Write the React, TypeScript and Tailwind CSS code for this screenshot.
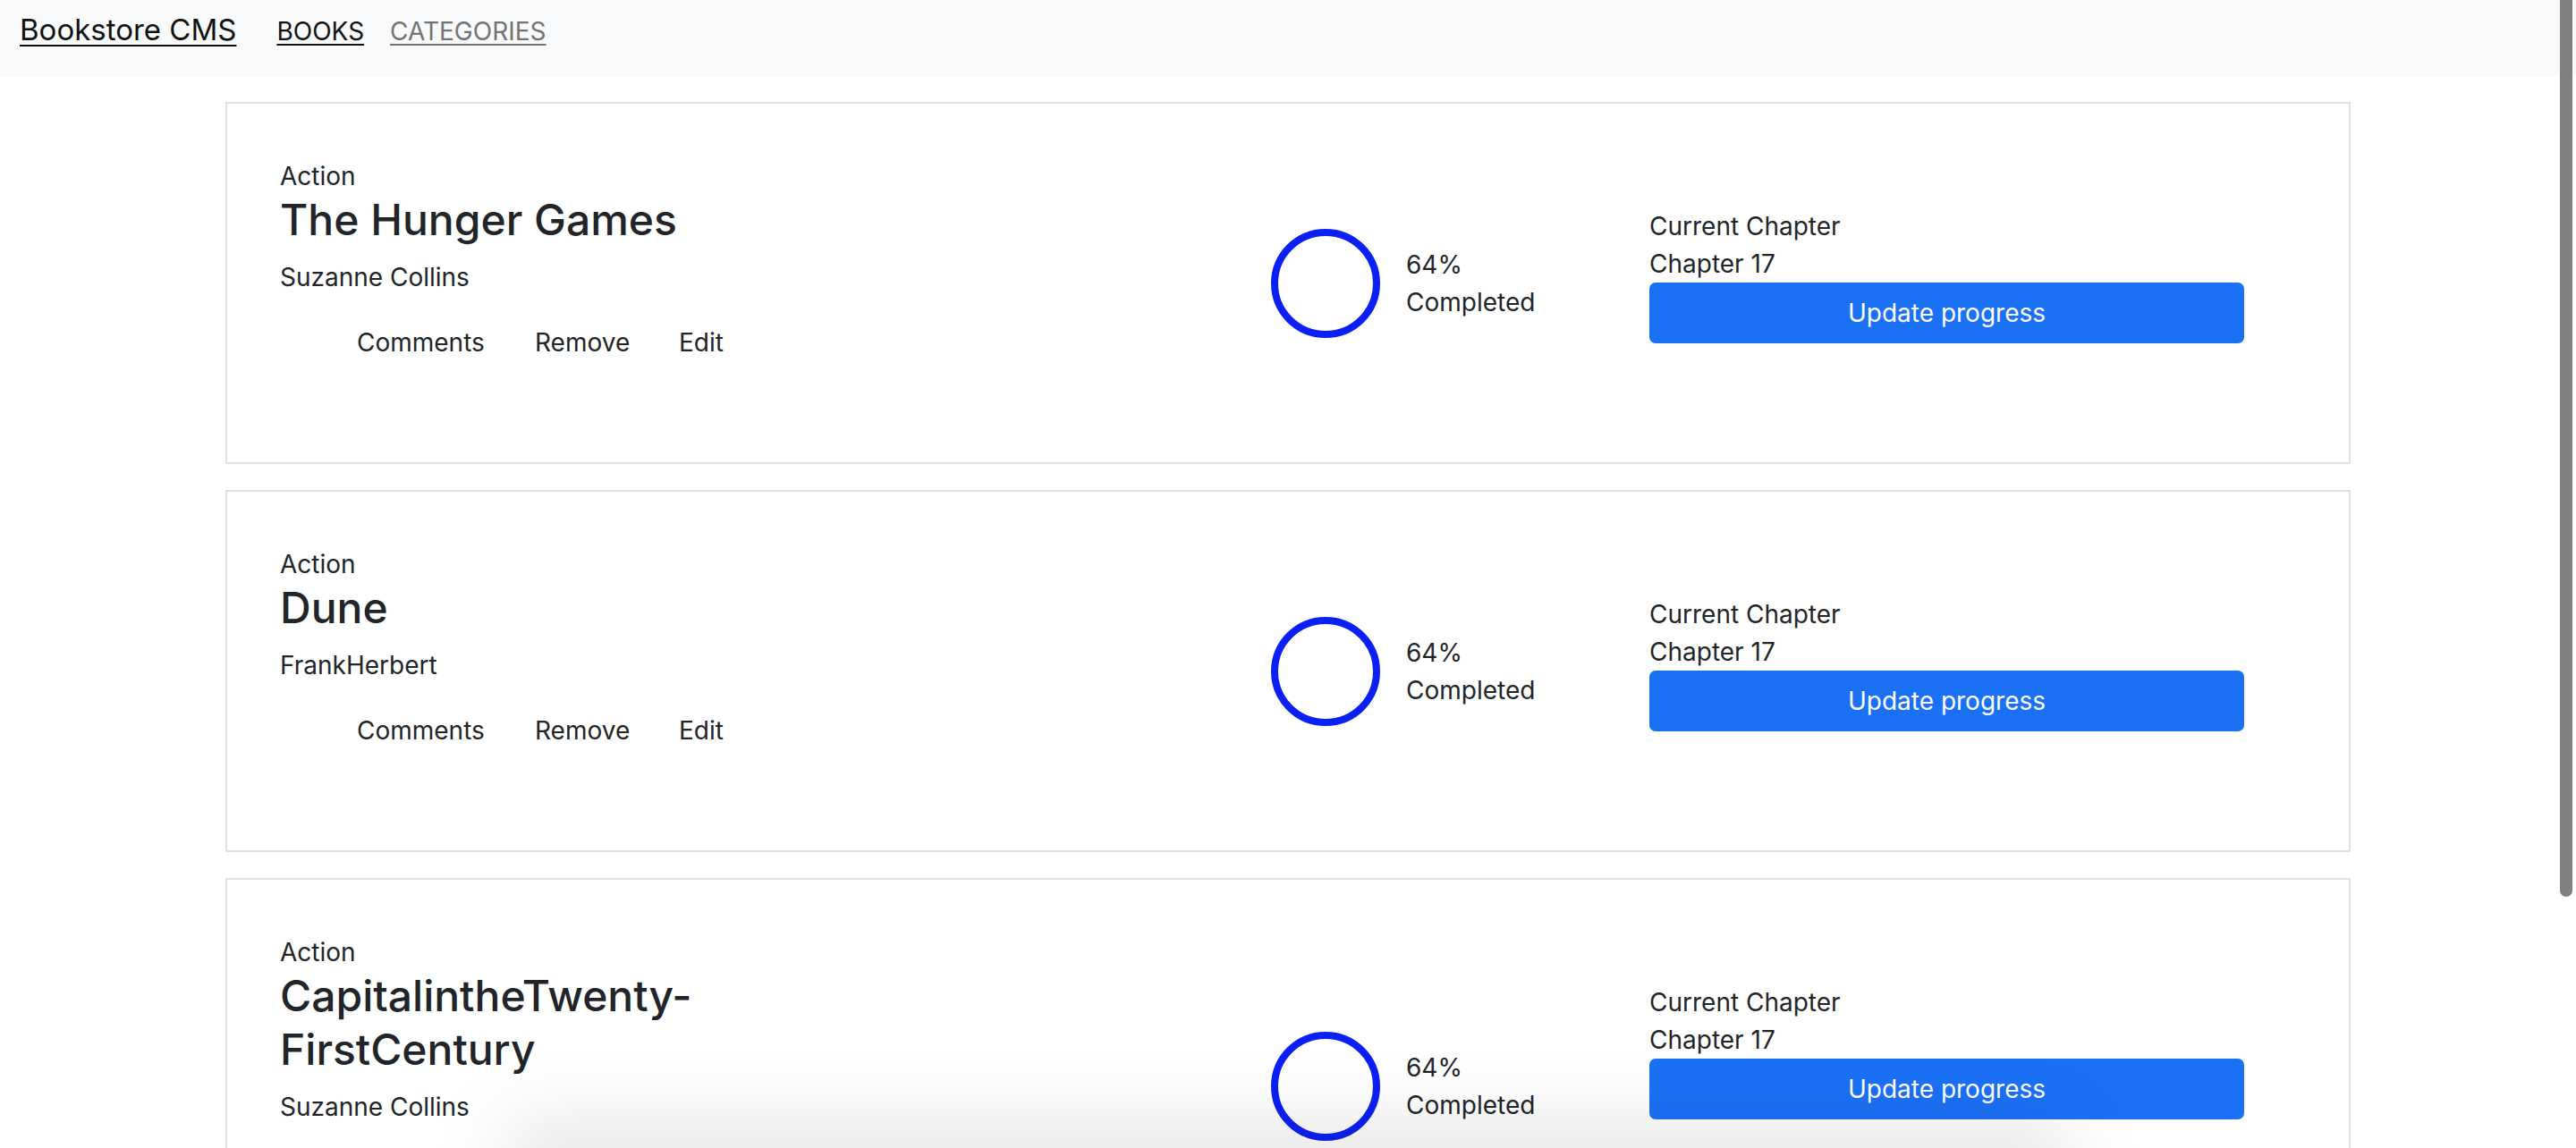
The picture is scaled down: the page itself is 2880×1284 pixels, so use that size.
import React from 'react'

interface Book {
  category: string
  title: string
  author: string
}

const books: Book[] = [
  { category: 'Action', title: 'The Hunger Games', author: 'Suzanne Collins' },
  { category: 'Action', title: 'Dune', author: 'FrankHerbert' },
  { category: 'Action', title: 'CapitalintheTwenty-FirstCentury', author: 'Suzanne Collins' }
]

const Navbar = () => (
  <nav className="h-[85px] bg-[#f8f9fa] flex items-baseline pl-[22px] pt-[12px]">
    <a href="#" className="text-[33px] leading-[43px] text-[#111] underline underline-offset-[5px] decoration-[2px]">
      Bookstore CMS
    </a>
    <a href="#" className="ml-[45px] text-[28px] leading-[43px] text-[#111] underline underline-offset-[4px] decoration-[2px]">
      BOOKS
    </a>
    <a href="#" className="ml-[29px] text-[28px] leading-[43px] text-[#747474] underline underline-offset-[4px] decoration-[2px]">
      CATEGORIES
    </a>
  </nav>
)

const BookCard = ({ book }: { book: Book }) => (
  <div className="border-2 border-[#dee2e6] bg-white flex items-center py-[62px] pl-[59px]">
    <div className="w-[1108px] shrink-0 pb-[54px]">
      <div className="text-[28px] leading-[38px]">{book.category}</div>
      <h2 className="max-w-[600px] break-words text-[48px] leading-[60px] font-medium">{book.title}</h2>
      <div className="mt-[16px] text-[28px] leading-[36px]">{book.author}</div>
      <div className="mt-[37px] flex text-[28px] leading-[36px] pl-[86px]">
        <button className="w-[199px] text-left">Comments</button>
        <button className="w-[161px] text-left">Remove</button>
        <button className="text-left">Edit</button>
      </div>
    </div>
    <div className="w-[423px] shrink-0 flex items-center">
      <div className="w-[122px] h-[122px] rounded-full border-[8px] border-[#0b20f5]" />
      <div className="ml-[29px] text-[28px] leading-[42px]">
        <div>64%</div>
        <div>Completed</div>
      </div>
    </div>
    <div className="w-[665px] shrink-0 self-start mt-[54px]">
      <div className="text-[28px] leading-[42px]">Current Chapter</div>
      <div className="text-[28px] leading-[42px]">Chapter 17</div>
      <button className="w-full h-[68px] rounded-[7px] bg-[#1b71f6] text-white text-[28px]">
        Update progress
      </button>
    </div>
  </div>
)

export default function App() {
  return (
    <div className="min-h-screen bg-white text-[#212529] font-['Inter','Noto_Sans',sans-serif] relative overflow-hidden">
      <Navbar />
      <main className="w-[2376px] mx-auto mt-[29px] flex flex-col gap-[29px]">
        {books.map((b) => (
          <BookCard key={b.title} book={b} />
        ))}
      </main>
      <div className="fixed top-0 right-[4px] w-[14px] h-[1003px] rounded-b-full bg-[#808080]" />
      <div className="fixed bottom-[-50px] left-[560px] w-[1760px] h-[80px] rounded-full bg-black/10 blur-2xl pointer-events-none" />
    </div>
  )
}
